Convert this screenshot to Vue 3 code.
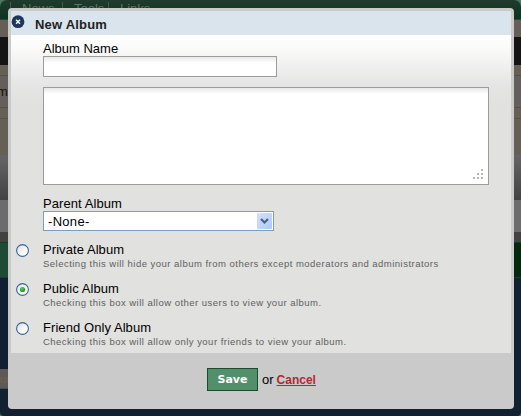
<template>
    <div class="page">
        <!-- 背景页面 -->
        <div class="backdrop">
            <div class="nav">
                <span v-for="item in navItems" :key="item" class="nav-item">{{ item }}</span>
            </div>
            <div class="band brown-top"></div>
            <div class="band black"></div>
            <div class="band brown-line"></div>
            <div class="band brown-row">m</div>
            <div class="band brown-low"></div>
            <div class="band shade"></div>
            <div class="band gray"></div>
            <div class="band dark"></div>
            <div class="band green"></div>
            <div class="band navy">
                <div class="strip">ur</div>
            </div>
        </div>

        <!-- 弹窗 -->
        <div class="dialog">
            <div class="dialog-header">
                <svg class="close" width="14" height="14" viewBox="0 0 14 14">
                    <circle cx="7" cy="6.7" r="6.4" fill="#1d3659" />
                    <path d="M5 4.7l4 4M9 4.7l-4 4" stroke="#fff" stroke-width="1.4" />
                </svg>
                <span class="dialog-title">New Album</span>
            </div>

            <div class="dialog-body">
                <label class="label" for="album-name">Album Name</label>
                <input id="album-name" v-model="name" class="text-input" type="text">
                <div class="area-box">
                    <textarea v-model="description" class="area"></textarea>
                    <svg class="grip" width="10" height="10" viewBox="0 0 10 10" fill="#b9b6b3">
                        <path d="M8 0h2v2h-2zM4 4h2v2h-2zM8 4h2v2h-2zM0 8h2v2h-2zM4 8h2v2h-2zM8 8h2v2h-2z" />
                    </svg>
                </div>
                <div class="label parent-label">Parent Album</div>
                <div class="select">
                    <span class="select-text">-None-</span>
                    <span class="select-btn">
                        <svg width="9" height="6" viewBox="0 0 9 6">
                            <path d="M1 1l3.5 3.5L8 1" fill="none" stroke="#4d6185" stroke-width="2.2" />
                        </svg>
                    </span>
                </div>

                <div class="options">
                    <div
                        v-for="option in options"
                        :key="option.value"
                        class="option"
                        @click="privacy = option.value"
                    >
                        <svg class="radio" width="13" height="13" viewBox="0 0 13 13">
                            <defs>
                                <linearGradient id="radio-fill" x1="0" y1="0" x2="1" y2="1">
                                    <stop offset="0" stop-color="#dcdcd7" />
                                    <stop offset="0.7" stop-color="#fff" />
                                </linearGradient>
                                <radialGradient id="radio-dot" cx="0.4" cy="0.35">
                                    <stop offset="0" stop-color="#55d551" />
                                    <stop offset="1" stop-color="#21a121" />
                                </radialGradient>
                            </defs>
                            <circle cx="6.5" cy="6.5" r="5.9" fill="url(#radio-fill)" stroke="#336799" stroke-width="1.1" />
                            <circle v-if="privacy === option.value" cx="6.5" cy="6.5" r="2.6" fill="url(#radio-dot)" />
                        </svg>
                        <div class="option-text">
                            <div class="option-title">{{ option.title }}</div>
                            <div class="option-desc">{{ option.desc }}</div>
                        </div>
                    </div>
                </div>
            </div>

            <div class="dialog-footer">
                <button class="save" type="button">Save</button>
                <span class="or">or</span>
                <a class="cancel" href="#">Cancel</a>
            </div>
        </div>
    </div>
</template>

<script setup>
import { ref } from 'vue';

const navItems = ['News', 'Tools', 'Links'];

const name = ref('');
const description = ref('');
const privacy = ref('public');

const options = [
    { value: 'private', title: 'Private Album', desc: 'Selecting this will hide your album from others except moderators and administrators' },
    { value: 'public', title: 'Public Album', desc: 'Checking this box will allow other users to view your album.' },
    { value: 'friends', title: 'Friend Only Album', desc: 'Checking this box will allow only your friends to view your album.' }
];
</script>

<style>
body {
    margin: 0;
    overflow: hidden;
}
</style>

<style scoped>
.page {
    position: relative;
    width: 521px;
    height: 416px;
    overflow: hidden;
    background: #4a7766;
    font-family: "Liberation Sans", Arial, sans-serif;
    font-size: 13px;
    color: #000;
}

/* 背景页面 */
.backdrop {
    display: flex;
    flex-direction: column;
    height: 416px;
    border-radius: 7px 7px 4px 4px;
    overflow: hidden;
}

.nav {
    display: flex;
    height: 20px;
    box-sizing: border-box;
    flex-shrink: 0;
    padding: 2px 0 0 10px;
    background: linear-gradient(#203b2d, #0c3322);
    border-bottom: 1px solid #284536;
}

.nav-item {
    width: 52px;
    height: 12px;
    box-sizing: border-box;
    padding-left: 11px;
    line-height: 13px;
    color: #66706a;
    border-left: 1px solid #45584c;
}

.nav-item:nth-child(2) {
    width: 46px;
}

.band {
    flex-shrink: 0;
    box-sizing: border-box;
}

.brown-top {
    height: 17px;
    background: #665f56;
}

.black {
    height: 28px;
    background: #141414;
}

.brown-line {
    height: 11px;
    background: #665f56;
    border-bottom: 1px solid #565145;
}

.brown-row {
    height: 32px;
    padding-top: 8px;
    margin-left: -3px;
    line-height: 15px;
    color: #111;
    background: #645f5c;
    border-bottom: 1px solid #565145;
}

.brown-low {
    height: 47px;
    background: linear-gradient(#665f56 10px, #565145 10px, #565145 11px, #655f55 11px);
}

.shade {
    height: 45px;
    background: linear-gradient(#656565, #424242);
}

.gray {
    height: 32px;
    background: #6c6c6c;
}

.dark {
    height: 10px;
    background: #434241;
}

.green {
    height: 36px;
    background: linear-gradient(90deg, #1f4a36 8px, #05290f 514px);
    border-top: 1px solid #103f26;
    border-bottom: 1px solid #1d3b31;
}

.navy {
    flex: 1;
    padding-top: 91px;
    background: #112131;
}

.strip {
    width: 20px;
    height: 20px;
    box-sizing: border-box;
    line-height: 20px;
    font-size: 11px;
    color: #74614a;
    background: #5c5a58;
    border-bottom: 1px solid #454b50;
}

/* 弹窗 */
.dialog {
    position: absolute;
    left: 8px;
    top: 8px;
    display: flex;
    flex-direction: column;
    width: 506px;
    height: 401px;
    padding: 3px;
    box-sizing: border-box;
    border-radius: 4px;
    background: #cacaca;
}

.dialog-header {
    display: flex;
    height: 24px;
    padding-top: 4px;
    box-sizing: border-box;
    background: #dae4ec;
}

.close {
    flex-shrink: 0;
}

.dialog-title {
    margin-left: 10px;
    line-height: 19px;
    font-size: 13px;
    font-weight: bold;
    letter-spacing: 0.2px;
    color: #222;
}

.dialog-body {
    display: flex;
    flex-direction: column;
    height: 318px;
    padding: 6px 0 0 32px;
    box-sizing: border-box;
    background: linear-gradient(#fff, #fbfbfa 12px, #e5e5e5 50px, #e1e1df 70px);
}

.label {
    height: 15px;
    line-height: 15px;
}

.text-input {
    width: 234px;
    height: 21px;
    padding: 2px;
    box-sizing: border-box;
    border: 1px solid #9c9c9c;
    border-radius: 0;
    outline: none;
    background: linear-gradient(#e8e8e8, #fff 6px);
}

.area-box {
    position: relative;
    width: 446px;
    height: 98px;
    margin-top: 10px;
}

.area {
    display: block;
    width: 446px;
    height: 98px;
    box-sizing: border-box;
    border: 1px solid #9c9c9c;
    outline: none;
    resize: none;
    background: linear-gradient(#e8e8e8, #fff 6px);
}

.grip {
    position: absolute;
    right: 6px;
    bottom: 6px;
}

.parent-label {
    margin-top: 11px;
    letter-spacing: 0.08px;
}

.select {
    display: flex;
    justify-content: space-between;
    width: 231px;
    height: 20px;
    box-sizing: border-box;
    padding: 1px 1px 1px 4px;
    border: 1px solid #7f9db9;
    background: #fff;
}

.select-text {
    line-height: 17px;
    letter-spacing: 0.3px;
}

.select-btn {
    display: flex;
    align-items: center;
    justify-content: center;
    width: 15px;
    height: 16px;
    border-radius: 1px;
    background: linear-gradient(135deg, #d5e1fd, #b0c8f6);
}

.options {
    margin: 11px 0 0 -27px;
}

.option {
    display: flex;
    height: 39px;
}

.radio {
    flex-shrink: 0;
    margin-top: 2px;
}

.option-text {
    margin-left: 14px;
    white-space: nowrap;
}

.option-title {
    height: 15px;
    line-height: 15px;
    letter-spacing: 0.07px;
}

.option-desc {
    line-height: 13px;
    font-size: 9.5px;
    letter-spacing: 0.48px;
    color: #5f5f5f;
}

.dialog-footer {
    display: flex;
    align-items: center;
    padding: 15px 0 0 196px;
}

.save {
    width: 51px;
    height: 23px;
    padding: 0;
    font-family: "DejaVu Sans", Verdana, sans-serif;
    font-size: 11px;
    font-weight: bold;
    line-height: 20px;
    color: #fff;
    background: #52906c;
    border: 1px solid #1d4a30;
    border-radius: 0;
}

.or {
    margin-left: 4px;
}

.cancel {
    margin-left: 3px;
    font-size: 12px;
    font-weight: bold;
    color: #b02a33;
}
</style>
